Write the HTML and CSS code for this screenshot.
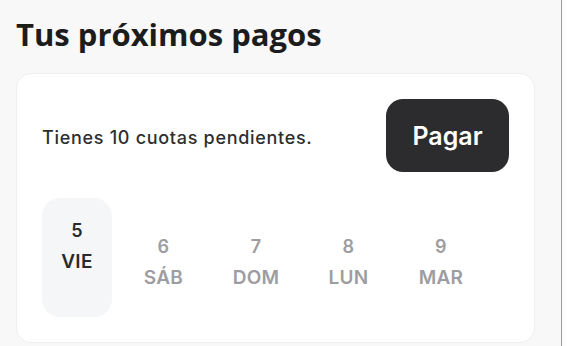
FILE: index.html
```html
<!DOCTYPE html>
<html lang="es">
<head>
<meta charset="utf-8">
<link rel="stylesheet" href="styles.css">
</head>
<body>
<div class="page">
  <h1 class="title">Tus próximos pagos</h1>
  <section class="card">
    <div class="card-head">
      <p class="pending">Tienes 10 cuotas pendientes.</p>
      <button class="pay">Pagar</button>
    </div>
    <div class="days">
      <div class="day selected"><span class="num">5</span><span class="label">VIE</span></div>
      <div class="day"><span class="num">6</span><span class="label">SÁB</span></div>
      <div class="day"><span class="num">7</span><span class="label">DOM</span></div>
      <div class="day"><span class="num">8</span><span class="label">LUN</span></div>
      <div class="day"><span class="num">9</span><span class="label">MAR</span></div>
    </div>
  </section>
</div>
</body>
</html>
```
FILE: styles.css
```css
* { box-sizing: border-box; }
html, body { margin: 0; padding: 0; background: #fcfcfc; }
.page {
  width: 562px;
  height: 346px;
  background: #f8f8f8;
  border-right: 1px solid #9c9c9c;
  padding: 14px 26px 0 16px;
  overflow: hidden;
}
.title {
  margin: 0 0 19px 0;
  font-family: "Open Sans", sans-serif;
  font-weight: 700;
  font-size: 31px;
  line-height: 40px;
  color: #1c1c1c;
}
.card {
  background: #fff;
  border: 1px solid #efefef;
  border-radius: 15px;
  padding: 25px 25px 25px 25px;
  font-family: Inter, sans-serif;
}
.card-head {
  display: flex;
  align-items: center;
  justify-content: space-between;
  height: 73px;
}
.pending {
  margin: 0;
  padding-top: 4px;
  font-size: 18px;
  font-weight: 500;
  letter-spacing: 0.7px;
  color: #2e2e30;
}
.pay {
  width: 123px;
  height: 73px;
  border: 0;
  border-radius: 17px;
  background: #2c2c2f;
  color: #fff;
  font-family: Inter, sans-serif;
  font-size: 25px;
  font-weight: 600;
}
.days {
  display: flex;
  gap: 22.5px;
  margin-top: 26px;
}
.day {
  width: 70px;
  height: 119px;
  display: flex;
  flex-direction: column;
  align-items: center;
  justify-content: center;
  gap: 9px;
  color: #9d9da1;
  font-weight: 600;
  padding-top: 9px;
  letter-spacing: 0.3px;
}
.day.selected {
  background: #f5f6f8;
  border-radius: 18px;
  color: #2a2a2c;
  padding-top: 0;
  padding-bottom: 22px;
  margin-right: -6px;
}
.num { font-size: 18px; line-height: 22px; }
.label { font-size: 19px; line-height: 22px; }
```
